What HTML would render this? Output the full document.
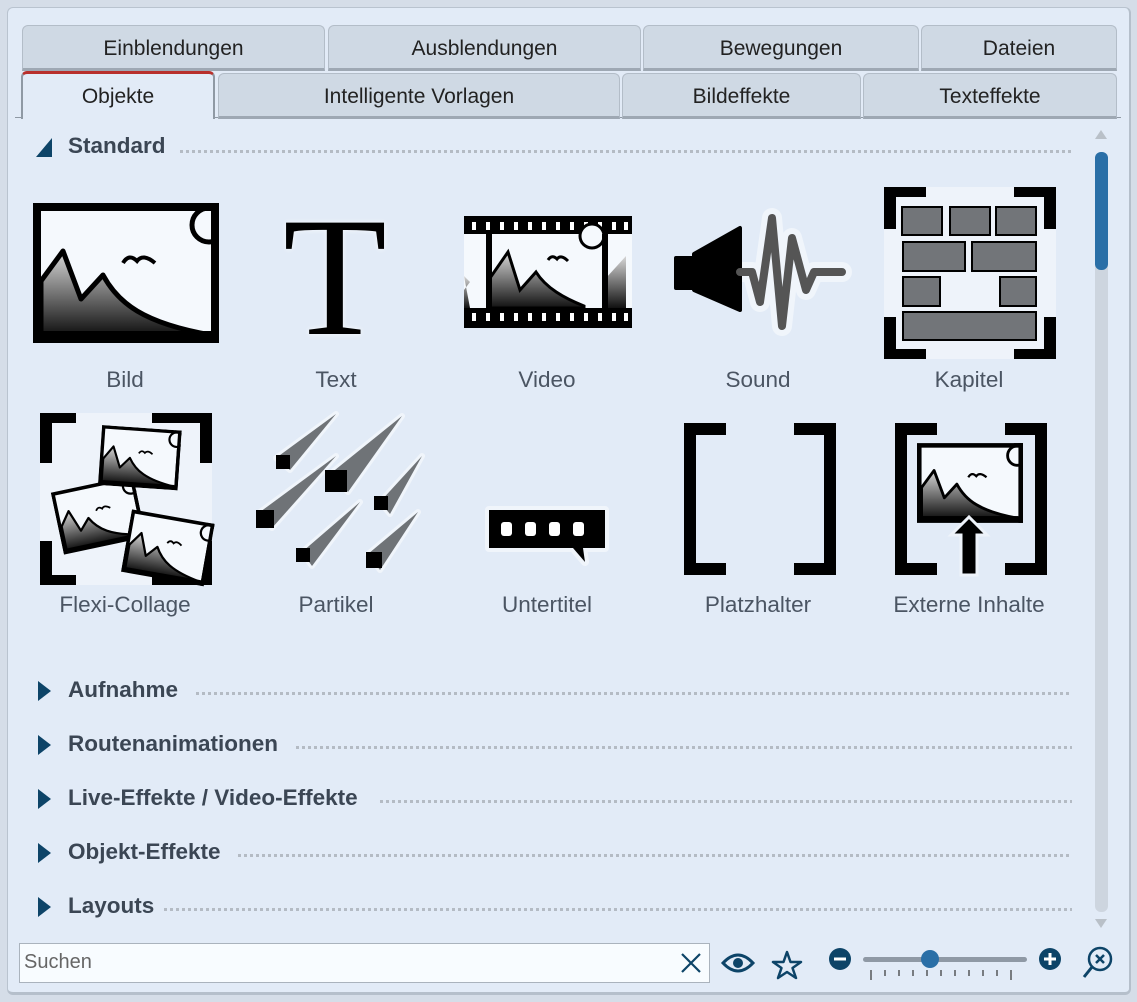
<!DOCTYPE html>
<html><head><meta charset="utf-8"><style>
*{margin:0;padding:0;box-sizing:border-box}
body{width:1137px;height:1002px;background:#d5dde8;position:relative;overflow:hidden;font-family:"Liberation Sans",sans-serif}
.abs{position:absolute}
.frame{left:7px;top:7px;width:1124px;height:988px;background:#e2ebf7;border:1px solid #b9c3cf;border-radius:6px;border-right:2px solid #b5bfcb;border-bottom:3px solid #b5bfcb}
.tab{position:absolute;background:#cfd9e4;border:1px solid #b3bdc8;border-bottom:3px solid #9ea8b3;border-radius:6px 6px 0 0;font-size:21px;color:#222;text-align:center;line-height:46px}
.tab.act{background:#e2ebf7;border-top:3px solid #b8302c;border-bottom:none;line-height:46px}
.sec{position:absolute;left:68px;font-size:22.5px;font-weight:bold;color:#3b4654}
.dots{position:absolute;height:3px;background-image:repeating-linear-gradient(90deg,#b4bbc4 0 3px,transparent 3px 6px)}
.tri{position:absolute;left:38px;width:0;height:0;border-top:10px solid transparent;border-bottom:10px solid transparent;border-left:13px solid #0d4468}
.lbl{position:absolute;width:240px;text-align:center;font-size:22.5px;color:#4b5563}
svg{position:absolute;overflow:visible}
</style></head><body>
<div class="abs frame"></div>
<div class="tab" style="left:22px;top:25px;width:303px;height:46px">Einblendungen</div>
<div class="tab" style="left:328px;top:25px;width:313px;height:46px">Ausblendungen</div>
<div class="tab" style="left:643px;top:25px;width:276px;height:46px">Bewegungen</div>
<div class="tab" style="left:921px;top:25px;width:196px;height:46px">Dateien</div>
<div class="abs" style="left:15px;top:117px;width:1106px;height:1px;background:#8f99a4"></div>
<div class="tab act" style="left:21px;top:71px;width:194px;height:48px;border-left:2px solid #8f99a4;border-right:2px solid #8f99a4">Objekte</div>
<div class="tab" style="left:218px;top:73px;width:402px;height:46px">Intelligente Vorlagen</div>
<div class="tab" style="left:622px;top:73px;width:239px;height:46px">Bildeffekte</div>
<div class="tab" style="left:863px;top:73px;width:254px;height:46px">Texteffekte</div>

<svg style="left:36px;top:138px" width="16" height="20"><path d="M16 0V19H0Z" fill="#0d4468"/></svg>
<div class="sec" style="top:133px">Standard</div>
<div class="dots" style="left:180px;top:150px;width:892px"></div>

<div class="tri" style="top:681px"></div><div class="sec" style="top:677px">Aufnahme</div><div class="dots" style="left:196px;top:692px;width:876px"></div>
<div class="tri" style="top:735px"></div><div class="sec" style="top:731px">Routenanimationen</div><div class="dots" style="left:296px;top:746px;width:776px"></div>
<div class="tri" style="top:789px"></div><div class="sec" style="top:785px">Live-Effekte / Video-Effekte</div><div class="dots" style="left:380px;top:800px;width:692px"></div>
<div class="tri" style="top:843px"></div><div class="sec" style="top:839px">Objekt-Effekte</div><div class="dots" style="left:238px;top:854px;width:834px"></div>
<div class="tri" style="top:897px"></div><div class="sec" style="top:893px">Layouts</div><div class="dots" style="left:164px;top:908px;width:908px"></div>

<svg style="left:1094px;top:128px" width="14" height="12"><path d="M1 11L7 2L13 11Z" fill="#b9c0c8"/></svg>
<div class="abs" style="left:1095px;top:152px;width:13px;height:760px;background:#cdd5df;border-radius:6px"></div>
<div class="abs" style="left:1095px;top:152px;width:13px;height:118px;background:#2a6fa7;border-radius:6px"></div>
<svg style="left:1094px;top:918px" width="14" height="12"><path d="M1 1L7 10L13 1Z" fill="#b9c0c8"/></svg>

<svg width="0" height="0" style="left:0;top:0"><defs>
<linearGradient id="g" x1="0" y1="0" x2="0" y2="1"><stop offset="0" stop-color="#d8d8d8"/><stop offset="1" stop-color="#111"/></linearGradient>
<symbol id="pic" viewBox="0 0 186 140">
<rect x="4" y="4" width="178" height="132" fill="#f5f9fd" stroke="#000" stroke-width="8"/>
<path d="M8 78L30 48L48 96L70 72C85 100 110 120 178 132V132H8Z" fill="url(#g)" stroke="#000" stroke-width="5" stroke-linejoin="round"/>
<rect x="8" y="128" width="170" height="4" fill="#000"/>
<circle cx="176" cy="22" r="17" fill="#f5f9fd" stroke="#000" stroke-width="5"/>
<rect x="178" y="0" width="8" height="140" fill="#000"/><rect x="170" y="0" width="16" height="8" fill="#000"/>
<path d="M90 60Q96 50 104 58Q110 50 122 60" fill="none" stroke="#000" stroke-width="4"/>
</symbol></defs></svg>

<svg style="left:33px;top:203px" width="186" height="140"><use href="#pic" width="186" height="140"/></svg>
<div class="lbl" style="left:5px;top:367px">Bild</div>
<div class="abs" style="left:283px;top:192px;font-family:'Liberation Serif',serif;font-size:170px;line-height:170px;color:#000;text-shadow:0 0 5px #f0f5fb,0 0 5px #f0f5fb">T</div>
<div class="lbl" style="left:216px;top:367px">Text</div>
<svg style="left:464px;top:216px" width="168" height="114">
<rect x="0" y="0" width="168" height="18" fill="#000"/><rect x="0" y="92" width="168" height="20" fill="#000"/>
<g fill="#fff">
<rect x="8" y="6" width="4" height="8"/><rect x="22" y="6" width="4" height="8"/><rect x="36" y="6" width="4" height="8"/><rect x="50" y="6" width="4" height="8"/><rect x="64" y="6" width="4" height="8"/><rect x="78" y="6" width="4" height="8"/><rect x="92" y="6" width="4" height="8"/><rect x="106" y="6" width="4" height="8"/><rect x="120" y="6" width="4" height="8"/><rect x="134" y="6" width="4" height="8"/><rect x="148" y="6" width="4" height="8"/><rect x="160" y="6" width="4" height="8"/>
<rect x="8" y="97" width="4" height="8"/><rect x="22" y="97" width="4" height="8"/><rect x="36" y="97" width="4" height="8"/><rect x="50" y="97" width="4" height="8"/><rect x="64" y="97" width="4" height="8"/><rect x="78" y="97" width="4" height="8"/><rect x="92" y="97" width="4" height="8"/><rect x="106" y="97" width="4" height="8"/><rect x="120" y="97" width="4" height="8"/><rect x="134" y="97" width="4" height="8"/><rect x="148" y="97" width="4" height="8"/><rect x="160" y="97" width="4" height="8"/>
</g>
<rect x="0" y="18" width="168" height="74" fill="#f5f9fd"/>
<path d="M26 62L44 36L56 74L72 56C82 72 100 82 120 90V92H26Z" fill="url(#g)" stroke="#000" stroke-width="3"/>
<path d="M142 62L162 40V92H142Z" fill="url(#g)"/><path d="M0 60L6 66L0 74L0 92L6 92Z" fill="url(#g)"/>
<circle cx="128" cy="20" r="12" fill="#f5f9fd" stroke="#000" stroke-width="3"/>
<rect x="22" y="18" width="6" height="74" fill="#000"/><rect x="138" y="18" width="6" height="74" fill="#000"/>
<path d="M84 44Q88 38 93 43Q97 38 104 45" fill="none" stroke="#000" stroke-width="3"/>
</svg>
<div class="lbl" style="left:427px;top:367px">Video</div>
<svg style="left:668px;top:210px" width="180" height="120">
<path d="M72 62H84L92 92L104 8L114 116L124 28L138 80L146 62H174" fill="none" stroke="#f0f5fb" stroke-width="20" stroke-linecap="round" stroke-linejoin="round"/>
<path d="M8 48H24V78H8ZM26 44L72 18V100L26 80Z" fill="#000" stroke="#000" stroke-width="4" stroke-linejoin="round"/>
<path d="M72 62H84L92 92L104 8L114 116L124 28L138 80L146 62H174" fill="none" stroke="#555" stroke-width="8" stroke-linecap="round" stroke-linejoin="round"/>
</svg>
<div class="lbl" style="left:638px;top:367px">Sound</div>
<svg style="left:884px;top:187px" width="172" height="172">
<rect x="0" y="0" width="172" height="172" fill="#eef3fa"/>
<path d="M0 0H42V10H12V42H0ZM172 0H130V10H160V42H172ZM0 172H42V162H12V130H0ZM172 172H130V162H160V130H172Z" fill="#000"/>
<g fill="#727579" stroke="#000" stroke-width="2">
<rect x="18" y="20" width="40" height="28"/><rect x="66" y="20" width="40" height="28"/><rect x="112" y="20" width="40" height="28"/>
<rect x="19" y="55" width="62" height="29"/><rect x="88" y="55" width="64" height="29"/>
<rect x="19" y="90" width="37" height="29"/><rect x="116" y="90" width="36" height="29"/>
<rect x="19" y="125" width="133" height="28"/></g>
</svg>
<div class="lbl" style="left:849px;top:367px">Kapitel</div>

<svg style="left:40px;top:413px" width="172" height="172">
<rect x="0" y="0" width="172" height="172" fill="#eef3fa"/>
<path d="M0 0H36V10H12V50H0ZM172 0H112V10H160V50H172ZM0 172H36V162H12V128H0ZM172 172H112V162H160V128H172Z" fill="#000"/>
<use href="#pic" width="84" height="64" transform="translate(24,142) rotate(-12) translate(0,-64)"/>
<use href="#pic" width="84" height="64" transform="translate(92,96) rotate(10)"/>
<use href="#pic" width="80" height="60" transform="translate(62,12) rotate(4)"/>
</svg>
<div class="lbl" style="left:5px;top:592px">Flexi-Collage</div>
<svg style="left:250px;top:412px" width="170" height="162">
<g fill="#6f7377" stroke="#f0f5fb" stroke-width="6" stroke-linejoin="round" paint-order="stroke">
<path d="M26 46L86 2L40 58Z"/><path d="M80 62L152 4L98 80Z"/><path d="M10 100L86 44L22 116Z"/><path d="M130 90L172 44L140 102Z"/><path d="M52 140L110 90L62 154Z"/><path d="M118 142L168 100L130 158Z"/>
</g>
<g fill="#000"><rect x="26" y="43" width="14" height="14"/><rect x="75" y="58" width="22" height="22"/><rect x="6" y="98" width="18" height="18"/><rect x="124" y="84" width="14" height="14"/><rect x="46" y="136" width="14" height="14"/><rect x="116" y="140" width="16" height="16"/></g>
</svg>
<div class="lbl" style="left:216px;top:592px">Partikel</div>
<svg style="left:487px;top:508px" width="120" height="60">
<path d="M2 2H118V40H96L98 54L86 40H2Z" fill="#000" stroke="#f0f5fb" stroke-width="8" paint-order="stroke" stroke-linejoin="round"/>
<g fill="#fff"><rect x="14" y="14" width="11" height="14" rx="3"/><rect x="38" y="14" width="11" height="14" rx="3"/><rect x="62" y="14" width="11" height="14" rx="3"/><rect x="86" y="14" width="11" height="14" rx="3"/></g>
</svg>
<div class="lbl" style="left:427px;top:592px">Untertitel</div>
<svg style="left:684px;top:423px" width="152" height="152">
<path d="M0 0H42V12H12V140H42V152H0ZM152 0H110V12H140V140H110V152H152Z" fill="#000"/>
</svg>
<div class="lbl" style="left:638px;top:592px">Platzhalter</div>
<svg style="left:895px;top:423px" width="152" height="152">
<path d="M0 0H42V12H12V140H42V152H0ZM152 0H110V12H140V140H110V152H152Z" fill="#000"/>
<use href="#pic" width="106" height="80" x="22" y="20"/>
<path d="M66 152V112H56L74 94L92 112H82V152Z" fill="#000" stroke="#eef3fa" stroke-width="3"/>
</svg>
<div class="lbl" style="left:849px;top:592px">Externe Inhalte</div>

<div class="abs" style="left:19px;top:943px;width:691px;height:40px;background:#f8fcff;border:1px solid #aab3bd"></div>
<div class="abs" style="left:24px;top:951px;font-size:20px;color:#666">Suchen</div>
<svg style="left:680px;top:952px" width="22" height="22"><path d="M2 2L20 20M20 2L2 20" stroke="#0d4468" stroke-width="2.2"/></svg>
<svg style="left:722px;top:953px" width="32" height="20"><path d="M1 10Q16 -6 31 10Q16 26 1 10Z" fill="none" stroke="#0d4468" stroke-width="3"/><circle cx="16" cy="10" r="5" fill="#0d4468"/></svg>
<svg style="left:771px;top:950px" width="32" height="30"><path d="M16 2L19.5 12H30L21.5 18L25 28L16 22L7 28L10.5 18L2 12H12.5Z" fill="none" stroke="#0d4468" stroke-width="2.5" stroke-linejoin="round"/></svg>
<svg style="left:829px;top:948px" width="22" height="22"><circle cx="11" cy="11" r="11" fill="#0d4468"/><rect x="5" y="9.5" width="12" height="3" fill="#fff"/></svg>
<div class="abs" style="left:863px;top:957px;width:164px;height:5px;background:#8f99a5;border-radius:3px"></div>
<div class="abs" style="left:921px;top:950px;width:18px;height:18px;background:#2a6fa7;border-radius:50%"></div>
<svg style="left:870px;top:970px" width="152" height="12" stroke="#333" stroke-width="1.2">
<path d="M1 0V10M15 0V6M29 0V6M43 0V6M57 0V6M71 0V6M85 0V6M99 0V6M113 0V6M127 0V6M141 0V10"/></svg>
<svg style="left:1039px;top:948px" width="22" height="22"><circle cx="11" cy="11" r="11" fill="#0d4468"/><rect x="5" y="9.5" width="12" height="3" fill="#fff"/><rect x="9.5" y="5" width="3" height="12" fill="#fff"/></svg>
<svg style="left:1082px;top:946px" width="32" height="34"><circle cx="18" cy="13" r="11" fill="none" stroke="#0d4468" stroke-width="2.5"/><path d="M10 21L2 31" stroke="#0d4468" stroke-width="3"/><path d="M14 9L22 17M22 9L14 17" stroke="#0d4468" stroke-width="2.5"/></svg>
</body></html>
